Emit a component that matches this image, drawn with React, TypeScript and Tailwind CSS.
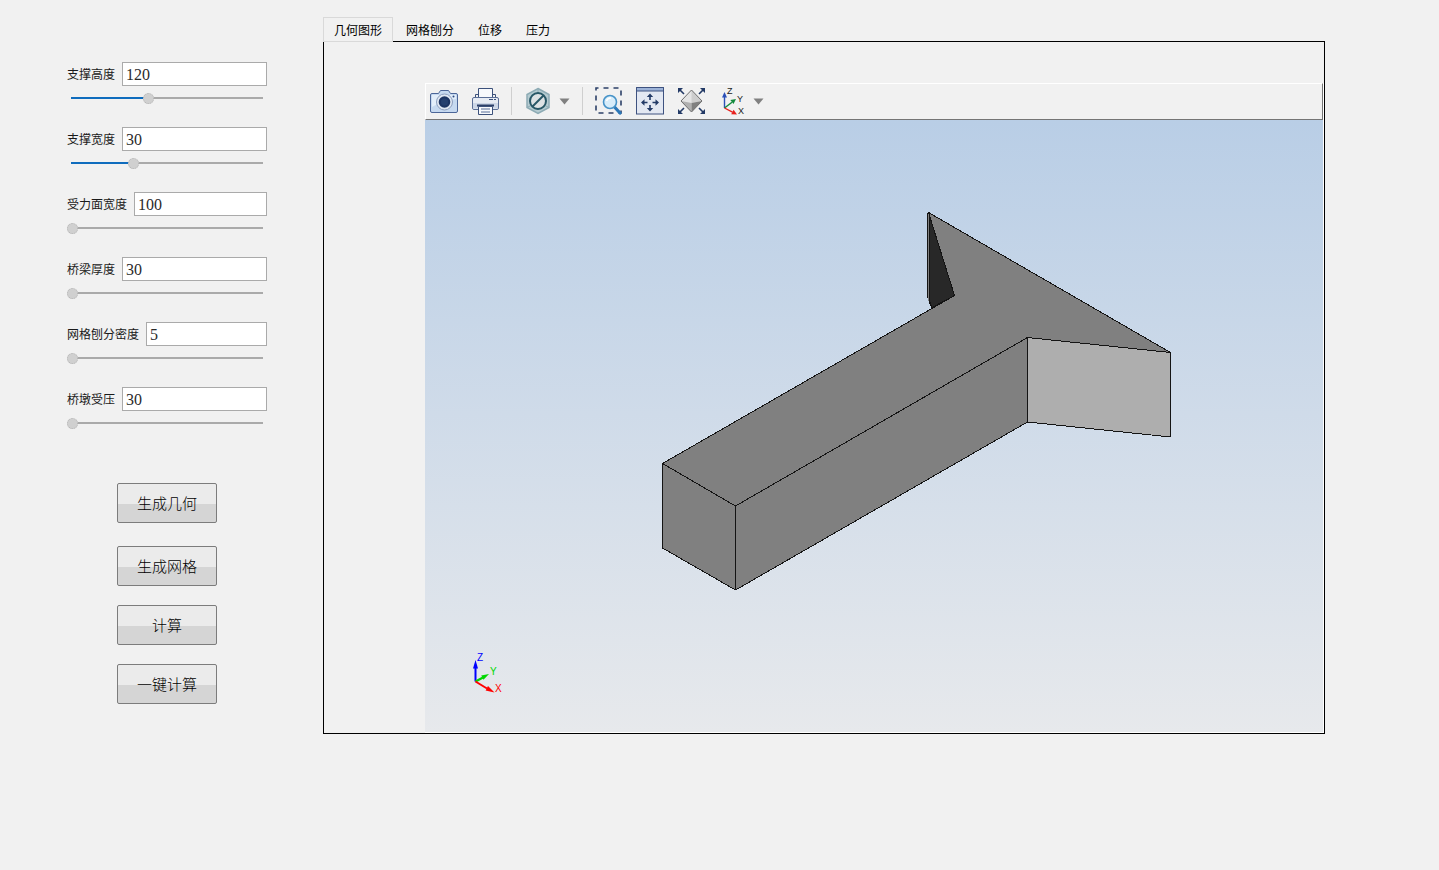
import { useState } from "react";
import type { CSSProperties, ReactNode } from "react";

type Param = {
	id: string;
	label: string;
	value: number;
	min: number;
	max: number;
};

const PARAMS: Param[] = [
	{ id: "support-height", label: "支撑高度", value: 120, min: 80, max: 180 },
	{ id: "support-width", label: "支撑宽度", value: 30, min: 17, max: 57 },
	{ id: "face-width", label: "受力面宽度", value: 100, min: 100, max: 200 },
	{ id: "beam-thickness", label: "桥梁厚度", value: 30, min: 30, max: 60 },
	{ id: "mesh-density", label: "网格刨分密度", value: 5, min: 5, max: 20 },
	{ id: "pier-pressure", label: "桥墩受压", value: 30, min: 30, max: 100 },
];

const TABS = ["几何图形", "网格刨分", "位移", "压力"];

function ParamField({ param }: { param: Param }) {
	const [value, setValue] = useState(param.value);
	const ratio = (value - param.min) / (param.max - param.min);
	// the filled part ends under the middle of the 11px thumb
	const fill = `calc(5px + (100% - 11px) * ${Math.min(1, Math.max(0, ratio))})`;

	return (
		<div className="flex flex-col gap-1">
			<div className="flex items-center gap-[7px]">
				<label htmlFor={param.id} className="shrink-0 text-xs text-[#1a1a1a]">
					{param.label}
				</label>
				<input
					id={param.id}
					type="text"
					value={value}
					onChange={(e) => setValue(Number(e.target.value) || 0)}
					className="h-6 w-full min-w-0 border border-[#aaaaaa] bg-white px-[3px] pt-0.5 font-['Liberation_Serif','Noto_Sans_CJK_SC',serif] text-base leading-5 text-[#2a2a2a] outline-none"
				/>
			</div>
			<input
				type="range"
				aria-label={param.label}
				min={param.min}
				max={param.max}
				value={value}
				onChange={(e) => setValue(Number(e.target.value))}
				style={{ "--fill": fill } as CSSProperties}
				className="h-4 w-full appearance-none bg-[linear-gradient(to_right,transparent_4px,#0f6cbd_4px,#0f6cbd_var(--fill),#aaaaaa_var(--fill),#aaaaaa_calc(100%-4px),transparent_calc(100%-4px))] bg-[length:100%_2px] bg-center bg-no-repeat outline-none [&::-webkit-slider-thumb]:size-[11px] [&::-webkit-slider-thumb]:appearance-none [&::-webkit-slider-thumb]:rounded-full [&::-webkit-slider-thumb]:border [&::-webkit-slider-thumb]:border-dotted [&::-webkit-slider-thumb]:border-[#b4b4b4] [&::-webkit-slider-thumb]:bg-[#d0d0d0]"
			/>
		</div>
	);
}

function ActionButton({
	children,
	className = "",
}: {
	children: ReactNode;
	className?: string;
}) {
	return (
		<button
			type="button"
			className={`h-10 w-[100px] rounded-xs border border-[#7c7c7c] bg-[linear-gradient(to_bottom,#ebebeb_0%,#ebebeb_53%,#d5d5d5_53%,#d5d5d5_100%)] text-[15px] font-light text-black ${className}`}
		>
			{children}
		</button>
	);
}

function ToolButton({ label, children }: { label: string; children: ReactNode }) {
	return (
		<button type="button" aria-label={label} className="size-7 shrink-0">
			<svg viewBox="0 0 28 28" className="size-7" fill="none">
				{children}
			</svg>
		</button>
	);
}

function DropArrow({ label }: { label: string }) {
	return (
		<button type="button" aria-label={label} className="shrink-0">
			<svg viewBox="0 0 11 7" className="h-[7px] w-[11px]">
				<path d="M0.5 0.5H10.5L5.5 6.5Z" fill="#808080" />
			</svg>
		</button>
	);
}

function Separator() {
	return <div className="h-7 w-px shrink-0 bg-[#cfcfcf]" />;
}

function Toolbar() {
	return (
		<div className="flex h-[37px] items-center gap-3 border border-t-white border-r-[#757575] border-b-[#757575] border-l-white bg-[#f1f1f1] pb-px pl-1">
			<div className="flex gap-[13px]">
				<ToolButton label="截图">
					<path
						d="M2 6.5H8.5L10.5 3.5H18.5L20.5 6.5H26Q27.5 6.5 27.5 8V24Q27.5 25.5 26 25.5H2Q0.5 25.5 0.5 24V8Q0.5 6.5 2 6.5Z"
						fill="#c6d9f0"
						stroke="#4c6698"
					/>
					<path d="M2 8H26V12Q14 13 2 20Z" fill="#e3eefa" />
					<circle cx="14.5" cy="15" r="8" fill="#dfe7f2" stroke="#8d9fbe" />
					<circle cx="14.5" cy="15" r="5.8" fill="#1c3463" />
					<circle cx="14.5" cy="15" r="3.6" fill="#25406f" />
					<circle cx="23.5" cy="9.5" r="1" fill="#2c4a80" />
				</ToolButton>
				<ToolButton label="打印">
					<path d="M7.5 10V1.5H21.5V10" fill="#f7f9fc" stroke="#3c517b" />
					<path d="M4.5 11V7.5H7.5M21.5 7.5H24.5V11" stroke="#3c517b" />
					<rect x="1.5" y="10.5" width="26" height="12" rx="1.5" fill="#e6ebf3" stroke="#5a6e96" />
					<path d="M2 16H27V21.5H2Z" fill="#ccd6e6" />
					<path d="M6 18.5H23" stroke="#2b3f68" strokeWidth="2" />
					<path d="M18 12.5H25" stroke="#3c517b" strokeDasharray="4 1" />
					<path d="M7.5 19.5H21.5V27.5H7.5Z" fill="#f7f9fc" stroke="#3c517b" />
					<path d="M10 22H19M10 25H19" stroke="#8d9cb9" strokeWidth="1.5" />
				</ToolButton>
			</div>
			<Separator />
			<div className="flex items-center gap-[7px]">
				<ToolButton label="透明度">
					<path
						d="M14 1.5L25 7.5V20.5L14 26.5L3 20.5V7.5Z"
						fill="#b5cbd1"
						stroke="#8dabb4"
						strokeWidth="1.5"
					/>
					<path d="M14 1.5V5M25 20.5L21 18.5M3 20.5L7 18.5" stroke="#8dabb4" />
					<circle cx="14" cy="14" r="8" fill="#dde2e4" stroke="#285766" strokeWidth="2" />
					<path d="M8.5 19.5L19.5 8.5" stroke="#285766" strokeWidth="2" />
				</ToolButton>
				<DropArrow label="透明度选项" />
			</div>
			<Separator />
			<div className="flex items-center gap-[7px]">
				<div className="flex gap-[13px]">
					<ToolButton label="框选缩放">
						<rect
							x="1"
							y="1"
							width="25"
							height="25"
							stroke="#2c4068"
							strokeWidth="1.6"
							strokeDasharray="5 5"
							strokeDashoffset="2.5"
						/>
						<path d="M19.5 20L25 26" stroke="#2d78b8" strokeWidth="3.2" strokeLinecap="round" />
						<circle cx="15" cy="15" r="6.5" fill="#d8edfa" stroke="#4793c8" strokeWidth="1.6" />
						<path d="M11.5 14Q12.5 11 16 11" stroke="#ffffff" strokeWidth="1.5" />
					</ToolButton>
					<ToolButton label="缩放到窗口">
						<rect x="0.5" y="0.5" width="27" height="26.5" fill="#e3e8f2" stroke="#3e5280" />
						<path d="M0.5 0.5H27.5V4H0.5Z" fill="#9db3d8" stroke="#3e5280" />
						<path
							d="M14 13V9M14 18V22M11.5 15.5H7.5M16.5 15.5H20.5"
							stroke="#233a66"
							strokeWidth="1.6"
						/>
						<path
							d="M14 6.5L17.2 10H10.8ZM14 24.5L17.2 21H10.8ZM5 15.5L8.5 12.3V18.7ZM23 15.5L19.5 12.3V18.7Z"
							fill="#233a66"
						/>
					</ToolButton>
					<ToolButton label="缩放到全部">
						<path d="M14.5 3L25 14L14.5 25L4 14Z" fill="#e4e4e4" />
						<path d="M14.5 3L25 14L14.5 16Z" fill="#cdcdcd" />
						<path d="M4 14L14.5 16V25Z" fill="#b0b0b0" />
						<path d="M25 14L14.5 16V25Z" fill="#808080" />
						<path d="M14.5 3L25 14L14.5 25L4 14Z" stroke="#6f6f6f" />
						<path
							d="M2 2L7 7M27 2L22 7M2 26L7 21M27 26L22 21"
							stroke="#233a66"
							strokeWidth="1.6"
						/>
						<path
							d="M1 1H6L1 6ZM28 1H23L28 6ZM1 27H6L1 22ZM28 27H23L28 22Z"
							fill="#233a66"
						/>
					</ToolButton>
					<ToolButton label="视图方向">
						<path d="M6.5 21V9" stroke="#2b50b8" strokeWidth="1.4" />
						<path d="M6.5 5L9 10.5H4Z" fill="#2b50b8" />
						<path d="M6.5 21L14 15.2" stroke="#138a3c" strokeWidth="1.4" />
						<path d="M18 12L15.5 17L12.3 13Z" fill="#138a3c" />
						<path d="M6.5 21L14.5 25.2" stroke="#e8201c" strokeWidth="1.4" />
						<path d="M19 27.5L13.2 27.3L15.6 22.8Z" fill="#e8201c" />
						<g
							fill="#222222"
							className="font-['Liberation_Sans','Noto_Sans_CJK_SC',sans-serif] text-[9px]"
						>
							<text x="9" y="7">Z</text>
							<text x="19" y="15">Y</text>
							<text x="20" y="27">X</text>
						</g>
					</ToolButton>
				</div>
				<DropArrow label="视图方向选项" />
			</div>
		</div>
	);
}

function Triad() {
	return (
		<g className="font-['Liberation_Sans','Noto_Sans_CJK_SC',sans-serif] text-[10px]">
			<path d="M50.5 561.5V546" stroke="#0000ff" strokeWidth="2" />
			<path d="M50.5 540L53 548.5H48Z" fill="#0000ff" />
			<path d="M50.5 561.5L58 557.5" stroke="#00d800" strokeWidth="2" />
			<path d="M64 554L58.5 559.8L56.2 555.6Z" fill="#00d800" />
			<path d="M50.5 561.5L62 568.5" stroke="#ff0000" strokeWidth="2" />
			<path d="M69.5 572.5L60.6 570.4L63 566Z" fill="#ff0000" />
			<text x="52" y="541" fill="#0000ff">Z</text>
			<text x="65" y="555" fill="#00d800">Y</text>
			<text x="70" y="572" fill="#ff0000">X</text>
		</g>
	);
}

function GeometryView() {
	return (
		<svg
			viewBox="0 0 898 612"
			role="img"
			aria-label="几何图形"
			className="block h-auto w-full bg-linear-to-b from-[#b9cee6] to-[#e7e9ec]"
		>
			<g stroke="#141414" strokeWidth="1" strokeLinejoin="bevel" shapeRendering="crispEdges">
				{/* back edge of the left wing */}
				<path d="M502.5 92.5V177L506.5 187.5" fill="none" />
				<path d="M503 93H504V181H503Z" fill="#808080" stroke="none" />
				<path d="M504.5 96L529.5 175.5L507 187.5L504.5 181Z" fill="#282828" />
				{/* top face */}
				<path
					d="M503.5 92.5L745.5 232.5L602.5 217.5L310.5 386L237.5 343.5L529.5 175.5Z"
					fill="#808080"
				/>
				{/* front faces */}
				<path d="M237.5 343.5L310.5 386V470L237.5 428Z" fill="#808080" />
				<path d="M310.5 386L602.5 217.5V302L310.5 470Z" fill="#808080" />
				<path d="M602.5 217.5L745.5 232.5V317L602.5 302Z" fill="#aeaeae" />
			</g>
			<Triad />
		</svg>
	);
}

export default function App() {
	const [activeTab, setActiveTab] = useState(TABS[0]);

	return (
		<div className="flex min-h-screen items-start gap-14 bg-[#f1f1f1] pr-[114px] pl-[67px] font-['Noto_Sans_CJK_SC',sans-serif]">
			<aside className="flex w-[200px] shrink-0 flex-col items-center pt-[62px]">
				<form className="flex w-full flex-col gap-[21px]">
					{PARAMS.map((param) => (
						<ParamField key={param.id} param={param} />
					))}
				</form>
				<div className="mt-[52px] flex flex-col gap-[19px]">
					<ActionButton className="mb-1">生成几何</ActionButton>
					<ActionButton>生成网格</ActionButton>
					<ActionButton>计算</ActionButton>
					<ActionButton>一键计算</ActionButton>
				</div>
			</aside>

			<main className="min-w-0 flex-1 pt-[17px]">
				<div role="tablist" className="relative flex gap-0.5">
					{TABS.map((tab) => (
						<button
							key={tab}
							type="button"
							role="tab"
							aria-selected={tab === activeTab}
							onClick={() => setActiveTab(tab)}
							className={`-mb-px h-[25px] border px-2.5 text-xs text-black ${
								tab === activeTab
									? "border-[#d9d9d9] bg-[#f1f1f1]"
									: "border-transparent"
							}`}
						>
							{tab}
						</button>
					))}
				</div>
				<div className="border border-black pt-[41px] pl-[101px]">
					<div className="border-r border-b border-white">
						<Toolbar />
						<GeometryView />
					</div>
				</div>
			</main>
		</div>
	);
}
